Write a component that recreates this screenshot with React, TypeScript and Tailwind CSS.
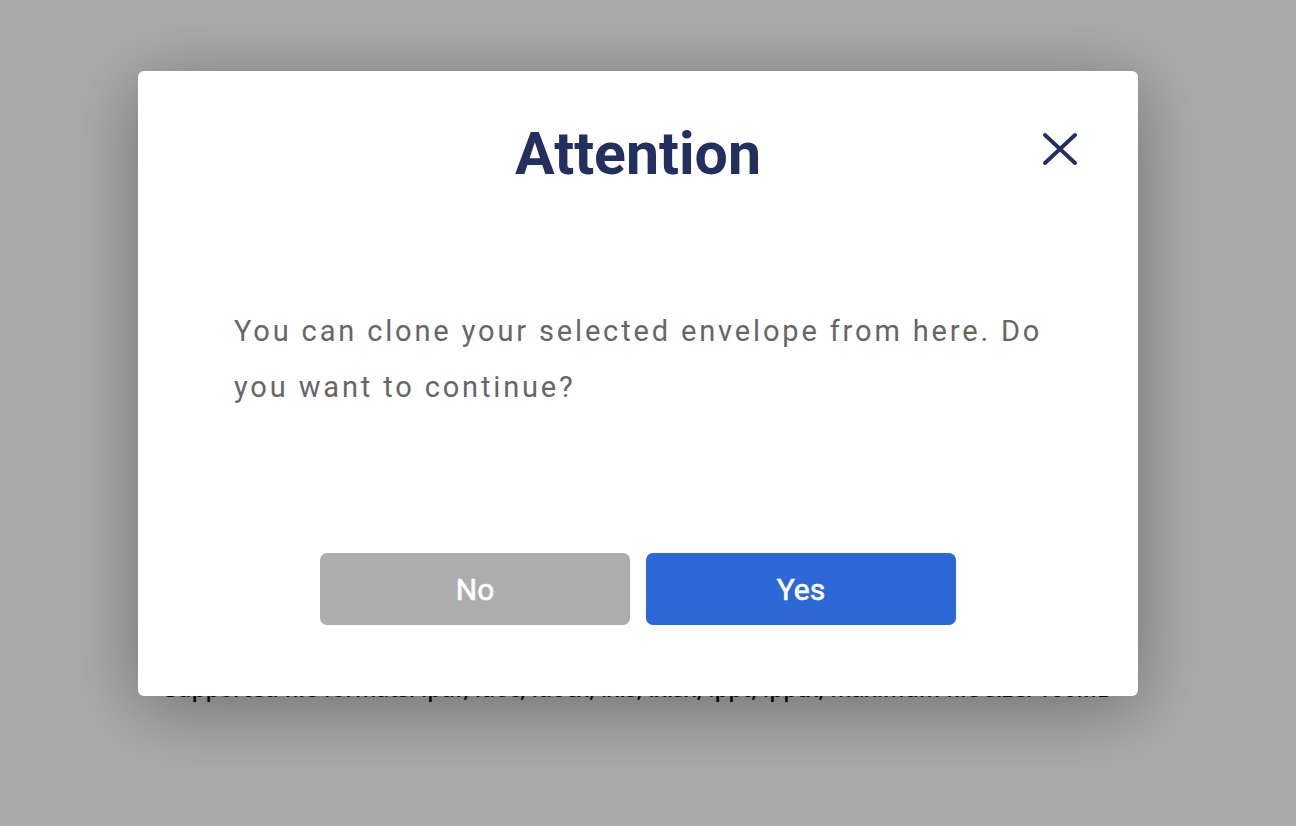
export default function App() {
  return (
    <div className="relative h-[826px] w-full overflow-hidden bg-white font-['Roboto',sans-serif]">

      {/* Page behind the dialog */}
      <div className="pt-[675px] pl-[165px]">
        <p className="text-[22.4px] font-semibold text-[#111] font-['Open_Sans',sans-serif] leading-[28px] whitespace-nowrap">
          Supported file formats: .pdf, .doc, .docx, .xls, .xlsx, .ppt, .pptx, maximum file size: 100MB
        </p>
      </div>

      {/* Overlay */}
      <div className="absolute inset-0 bg-black/[0.333] flex justify-center items-start pt-[71px] pr-[20px]">

        <div className="relative w-[1000px] h-[625px] bg-white rounded-[6px] shadow-[0_12px_70px_rgba(0,0,0,0.35)] flex flex-col">

          {/* Close */}
          <button className="absolute top-[62px] right-[61px] w-[34px] h-[32px]">
            <svg width="34" height="32" viewBox="0 0 34 32" fill="none">
              <path
                d="M2 2 L32 30 M32 2 L2 30"
                stroke="#232f5e"
                strokeWidth="3.8"
                strokeLinecap="round"
              />
            </svg>
          </button>

          <h2 className="pt-[48px] text-center text-[59px] leading-[70px] font-bold text-[#232f5e]">
            Attention
          </h2>

          <p className="mt-[114px] pl-[96px] pr-[90px] text-[29px] leading-[56px] tracking-[2.85px] text-[#666666]">
            You can clone your selected envelope from here. Do you want to continue?
          </p>

          <div className="mt-auto mb-[71px] flex justify-center gap-4">
            <button className="w-[310px] h-[72px] rounded-[7px] bg-[#adadad] text-white text-[30px] font-normal [-webkit-text-stroke:0.6px_white]">
              No
            </button>
            <button className="w-[310px] h-[72px] rounded-[7px] bg-[#2d69d6] text-white text-[30px] font-normal [-webkit-text-stroke:0.6px_white]">
              Yes
            </button>
          </div>

        </div>

      </div>

    </div>
  );
}
